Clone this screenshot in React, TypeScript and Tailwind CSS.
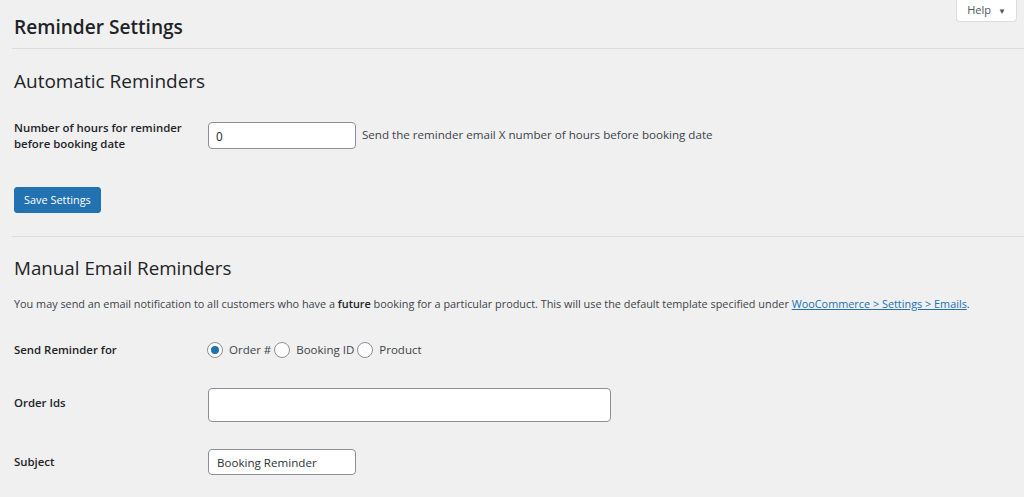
import { useState } from 'react'

const font = { fontFamily: '"Open Sans", "Noto Sans", sans-serif' }

function Radio({ checked, label }: { checked?: boolean; label: string }) {
  return (
    <label className="flex items-center">
      <span className="w-4 h-4 rounded-full border border-[#8c8f94] bg-white flex items-center justify-center mr-[6px]">
        {checked && <span className="w-2 h-2 rounded-full bg-[#2271b1]" />}
      </span>
      <span className="mr-[3px]">{label}</span>
    </label>
  )
}

export default function App() {
  const [hours, setHours] = useState('0')
  const [subject, setSubject] = useState('Booking Reminder')

  return (
    <div className="min-h-[497px] bg-[#f0f0f1] text-[#1d2327] relative" style={font}>
      <div className="absolute top-0 right-[7px] h-[22px] w-[61px] bg-white border border-t-0 border-[#dcdcde] rounded-b flex items-center justify-center gap-[7px] text-[11px] text-[#50575e]">
        Help
        <span className="text-[8px]">▼</span>
      </div>

      <div className="pl-[12px]">
        <h1 className="pl-[2px] pt-[14px] pb-[8px] text-[19.1px] leading-[26px] font-semibold">Reminder Settings</h1>
        <hr className="border-0 border-t border-[#dcdcde]" />

        <div className="pl-[2px]">
          <h2 className="mt-[19px] text-[19px] leading-[26px] font-normal">Automatic Reminders</h2>

          <div className="flex items-start mt-[26px]">
            <div className="w-[194px] text-[11.4px] font-semibold leading-[16px]">
              Number of hours for reminder
              <br />
              before booking date
            </div>
            <input
              value={hours}
              onChange={(e) => setHours(e.target.value)}
              className="w-[148px] h-[27px] mt-[2px] bg-white border border-[#8c8f94] rounded px-[7px] text-[11.7px] outline-none"
            />
            <span className="ml-[6px] mt-[7px] text-[11.6px] leading-[16px] text-[#3c434a]">
              Send the reminder email X number of hours before booking date
            </span>
          </div>

          <button className="mt-[35px] h-[26px] px-[9px] bg-[#2271b1] text-white text-[10.9px] rounded-[3px] border border-[#2271b1]">
            Save Settings
          </button>
        </div>

        <hr className="mt-[23px] border-0 border-t border-[#dcdcde]" />

        <div className="pl-[2px]">
          <h2 className="mt-[18px] text-[18.8px] leading-[26px] font-normal">Manual Email Reminders</h2>
          <p className="mt-[14px] text-[10.87px] leading-[18px] text-[#3c434a] whitespace-nowrap">
            You may send an email notification to all customers who have a <b className="font-semibold text-[#1d2327]">future</b> booking for a particular product. This will use the default template specified under{' '}
            <a className="text-[#2271b1] underline">WooCommerce &gt; Settings &gt; Emails</a>.
          </p>

          <div className="flex items-center mt-[28px] h-[18px]">
            <div className="w-[193px] text-[11.4px] font-semibold">Send Reminder for</div>
            <div className="flex items-center text-[11.5px] text-[#3c434a]">
              <Radio checked label="Order #" />
              <Radio label="Booking ID" />
              <Radio label="Product" />
            </div>
          </div>

          <div className="flex items-center mt-[29px]">
            <div className="w-[194px] text-[11.4px] font-semibold -mt-[5px]">Order Ids</div>
            <input className="w-[403px] h-[34px] bg-white border border-[#8c8f94] rounded px-2 text-[12px] outline-none" />
          </div>

          <div className="flex items-center mt-[27px]">
            <div className="w-[194px] text-[11.4px] font-semibold">Subject</div>
            <input
              value={subject}
              onChange={(e) => setSubject(e.target.value)}
              className="w-[148px] h-[26px] bg-white border border-[#8c8f94] rounded px-[8px] text-[11.6px] text-[#2c3338] outline-none"
            />
          </div>
        </div>
      </div>
    </div>
  )
}
